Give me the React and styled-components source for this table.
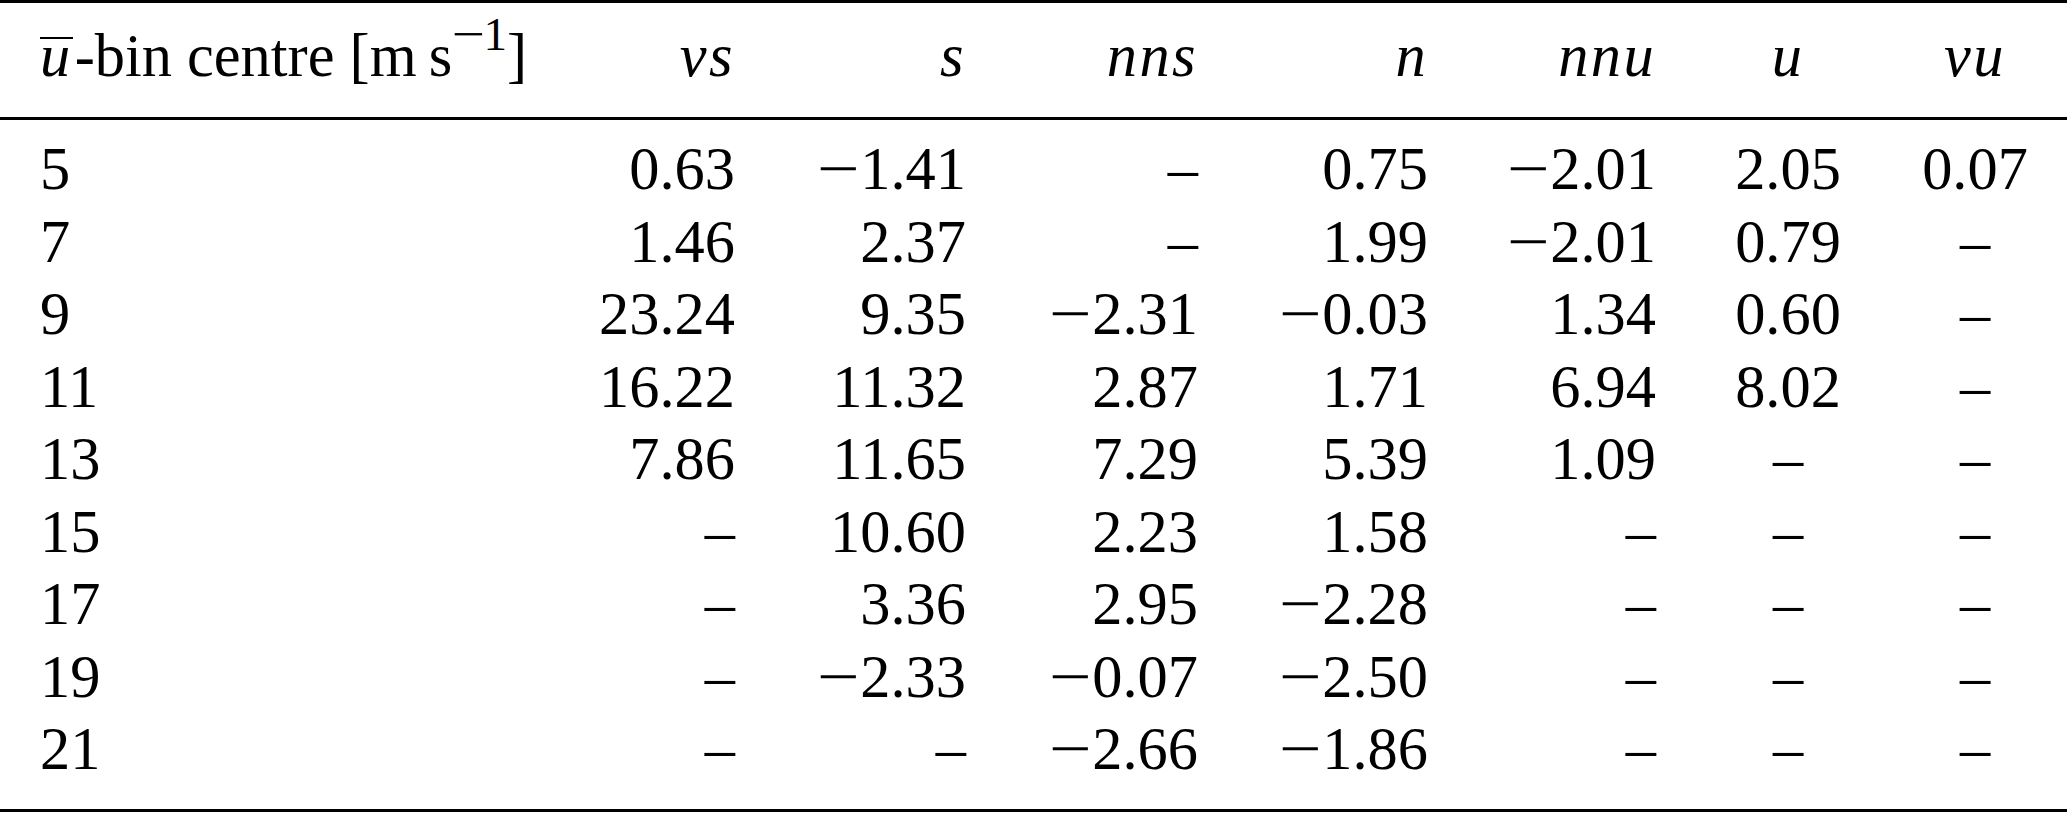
import React from 'react';
import styled, { createGlobalStyle } from 'styled-components';

const GlobalStyle = createGlobalStyle`
  html, body {
    margin: 0;
    padding: 0;
    background: #ffffff;
  }
  body {
    font-family: "Liberation Serif", "Times New Roman", serif;
    color: #000;
  }
`;

// right edges / centres of the columns are taken from the reference layout
const COLUMNS = '523px 172px 231px 232px 230px 228px 264px 110px';

const Table = styled.div`
  width: 100%;
  border-top: 3px solid #000;
  border-bottom: 3px solid #000;
  font-size: 60.4px;
  line-height: 72.5px;
`;

const Head = styled.div`
  padding: 17.4px 0 24.1px 40px;
  border-bottom: 3px solid #000;
`;

const Body = styled.div`
  padding: 13.4px 0 23.1px 40px;
`;

const Row = styled.div`
  display: grid;
  grid-template-columns: ${COLUMNS};
  height: 72.5px;
  white-space: nowrap;
`;

const Cell = styled.div`
  text-align: ${(p) => p.$align || 'right'};
`;

const MathVar = styled.span`
  font-style: italic;
  letter-spacing: 0.04em;
`;

const Bar = styled.span`
  display: inline-block;
  border-top: 2px solid #000;
  line-height: 0.5em;
  padding-top: 2px;
  margin-right: 2px;
`;

const Sup = styled.span`
  font-size: 0.78em;
  line-height: 0;
  vertical-align: 0.55em;
`;

// math minus is wider than the text one
const MinusGlyph = styled.span`
  display: inline-block;
  width: ${(p) => (p.$small ? '0.66em' : '0.72em')};
  text-align: left;
  transform: scaleX(1.25);
  transform-origin: left center;
`;

const Minus = ({ small }) => <MinusGlyph $small={small}>{'\u2212'}</MinusGlyph>;

const Num = ({ v }) => {
  if (v.startsWith('-')) {
    return (
      <>
        <Minus />
        {v.slice(1)}
      </>
    );
  }
  return v;
};

const headers = [
  { key: 'vs', align: 'right' },
  { key: 's', align: 'right' },
  { key: 'nns', align: 'right' },
  { key: 'n', align: 'right' },
  { key: 'nnu', align: 'right' },
  { key: 'u', align: 'center' },
  { key: 'vu', align: 'center' },
];

const D = '\u2013';

const rows = [
  ['5', '0.63', '-1.41', D, '0.75', '-2.01', '2.05', '0.07'],
  ['7', '1.46', '2.37', D, '1.99', '-2.01', '0.79', D],
  ['9', '23.24', '9.35', '-2.31', '-0.03', '1.34', '0.60', D],
  ['11', '16.22', '11.32', '2.87', '1.71', '6.94', '8.02', D],
  ['13', '7.86', '11.65', '7.29', '5.39', '1.09', D, D],
  ['15', D, '10.60', '2.23', '1.58', D, D, D],
  ['17', D, '3.36', '2.95', '-2.28', D, D, D],
  ['19', D, '-2.33', '-0.07', '-2.50', D, D, D],
  ['21', D, D, '-2.66', '-1.86', D, D, D],
];

export default function App() {
  return (
    <>
      <GlobalStyle />
      <Table>
        <Head>
          <Row>
            <Cell $align="left">
              <MathVar><Bar>u</Bar></MathVar>-bin centre [m{'\u2009'}s<Sup><Minus small />1</Sup>]
            </Cell>
            {headers.map((h) => (
              <Cell key={h.key} $align={h.align}>
                <MathVar>{h.key}</MathVar>
              </Cell>
            ))}
          </Row>
        </Head>
        <Body>
          {rows.map((r) => (
            <Row key={r[0]}>
              <Cell $align="left">{r[0]}</Cell>
              {r.slice(1).map((v, i) => (
                <Cell key={i} $align={headers[i].align}>
                  <Num v={v} />
                </Cell>
              ))}
            </Row>
          ))}
        </Body>
      </Table>
    </>
  );
}
